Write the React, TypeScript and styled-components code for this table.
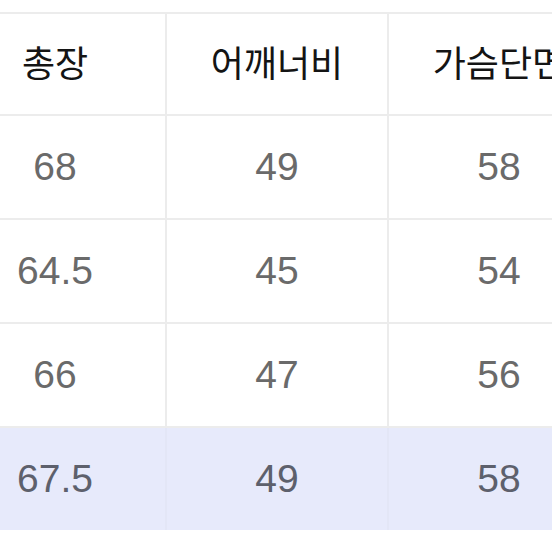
import React from 'react';
import styled, { createGlobalStyle } from 'styled-components';

const GlobalStyle = createGlobalStyle`
  html, body {
    margin: 0;
    padding: 0;
    background: #ffffff;
  }
`;

const Page = styled.div`
  width: 552px;
  height: 552px;
  overflow: hidden;
  background: #ffffff;
  padding-top: 12px;
  box-sizing: border-box;
`;

const Table = styled.div`
  display: flex;
  flex-direction: column;
  gap: 2px;
  width: max-content;
  margin-left: -57px;
  border-top: 2px solid #ececec;
  border-left: 2px solid #ececec;
  background: #ececec;
`;

const Row = styled.div<{ $highlight?: boolean; $head?: boolean }>`
  display: grid;
  grid-template-columns: repeat(3, 220px);
  gap: 2px;
  height: ${({ $head }) => ($head ? '100px' : '102px')};
  background: ${({ $highlight }) => ($highlight ? '#e3e6f6' : '#ececec')};
`;

const Cell = styled.div<{ $highlight?: boolean; $head?: boolean }>`
  display: flex;
  align-items: center;
  justify-content: center;
  padding-bottom: ${({ $head }) => ($head ? '6px' : '0')};
  box-sizing: border-box;
  background: ${({ $highlight }) => ($highlight ? '#e7eafb' : '#ffffff')};
`;

const HeadText = styled.span`
  font-family: 'Noto Sans CJK KR', 'Noto Sans', sans-serif;
  font-size: 36px;
  color: #141414;
  white-space: nowrap;
`;

const ValueText = styled.span<{ $highlight?: boolean }>`
  font-family: 'Liberation Sans', Arial, sans-serif;
  font-size: 39px;
  color: ${({ $highlight }) => ($highlight ? '#5d606c' : '#6a6a6a')};
`;

const headers = ['총장', '어깨너비', '가슴단면'];

const rows = [
  ['68', '49', '58'],
  ['64.5', '45', '54'],
  ['66', '47', '56'],
  ['67.5', '49', '58'],
];

const App: React.FC = () => {
  return (
    <>
      <GlobalStyle />
      <Page>
        <Table>
          <Row $head>
            {headers.map((h) => (
              <Cell key={h} $head>
                <HeadText>{h}</HeadText>
              </Cell>
            ))}
          </Row>
          {rows.map((row, i) => {
            const hl = i === rows.length - 1;
            return (
              <Row key={i} $highlight={hl}>
                {row.map((v, j) => (
                  <Cell key={j} $highlight={hl}>
                    <ValueText $highlight={hl}>{v}</ValueText>
                  </Cell>
                ))}
              </Row>
            );
          })}
        </Table>
      </Page>
    </>
  );
};

export default App;
